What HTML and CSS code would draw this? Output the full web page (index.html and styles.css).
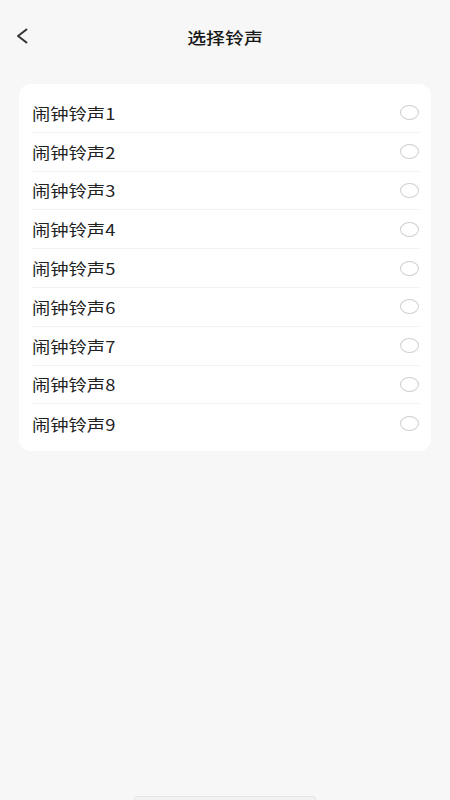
FILE: index.html
```html
<!DOCTYPE html>
<html lang="zh-CN">
<head>
<meta charset="utf-8">
<title>选择铃声</title>
<link rel="stylesheet" href="styles.css">
</head>
<body>
<div class="page">
  <header class="topbar">
    <button class="back" aria-label="返回">
      <svg width="12" height="16" viewBox="0 0 12 16"><polyline points="10.5,1.5 2,8 10.5,14.5" fill="none" stroke="#333" stroke-width="2" stroke-linecap="round" stroke-linejoin="round"/></svg>
    </button>
    <h1 class="title"><span>选择铃声</span></h1>
    <div></div>
  </header>
  <ul class="list">
    <li class="item"><span class="label">闹钟铃声1</span><span class="radio"></span></li>
    <li class="item"><span class="label">闹钟铃声2</span><span class="radio"></span></li>
    <li class="item"><span class="label">闹钟铃声3</span><span class="radio"></span></li>
    <li class="item"><span class="label">闹钟铃声4</span><span class="radio"></span></li>
    <li class="item"><span class="label">闹钟铃声5</span><span class="radio"></span></li>
    <li class="item"><span class="label">闹钟铃声6</span><span class="radio"></span></li>
    <li class="item"><span class="label">闹钟铃声7</span><span class="radio"></span></li>
    <li class="item"><span class="label">闹钟铃声8</span><span class="radio"></span></li>
    <li class="item"><span class="label">闹钟铃声9</span><span class="radio"></span></li>
  </ul>
</div>
<div class="home-indicator"></div>
</body>
</html>
```
FILE: styles.css
```css
html, body {
  margin: 0;
  padding: 0;
  background: #f7f7f7;
  font-family: "Noto Sans CJK SC", "Noto Sans", sans-serif;
  color: #222;
}
.page {
  width: 450px;
  min-height: 800px;
}
.topbar {
  display: grid;
  grid-template-columns: 1fr auto 1fr;
  align-items: center;
  height: 74px;
}
.back {
  justify-self: start;
  margin-left: 16px;
  padding: 0;
  border: 0;
  background: none;
  display: flex;
  align-items: center;
  height: 16px;
  margin-top: -2px;
}
.title {
  margin: 0;
  font-size: 16px;
  font-weight: 500;
  color: #1a1a1a;
  line-height: 20px;
}
.title span {
  display: inline-block;
  transform: scaleX(1.18);
  transform-origin: center;
}
.list {
  list-style: none;
  margin: 10px 19px 0;
  padding: 10px 12px 8px 13px;
  background: #fff;
  border-radius: 13px / 11px;
}
.item {
  display: flex;
  align-items: center;
  justify-content: space-between;
  height: 38.8px;
  box-sizing: border-box;
  border-bottom: 1px solid #f1f1f1;
}
.item:last-child {
  border-bottom: 0;
}
.label {
  display: inline-block;
  font-size: 15.5px;
  line-height: 20px;
  color: #222;
  transform: scaleX(1.18);
  transform-origin: left center;
}
.radio {
  width: 19px;
  height: 15px;
  box-sizing: border-box;
  border: 1.8px solid #cfcfcf;
  border-radius: 50%;
}
.home-indicator {
  position: fixed;
  left: 134px;
  bottom: -2px;
  width: 182px;
  height: 6px;
  box-sizing: border-box;
  border: 1px solid #e4e4e4;
  border-radius: 3px;
  background: #f2f2f2;
}
```
